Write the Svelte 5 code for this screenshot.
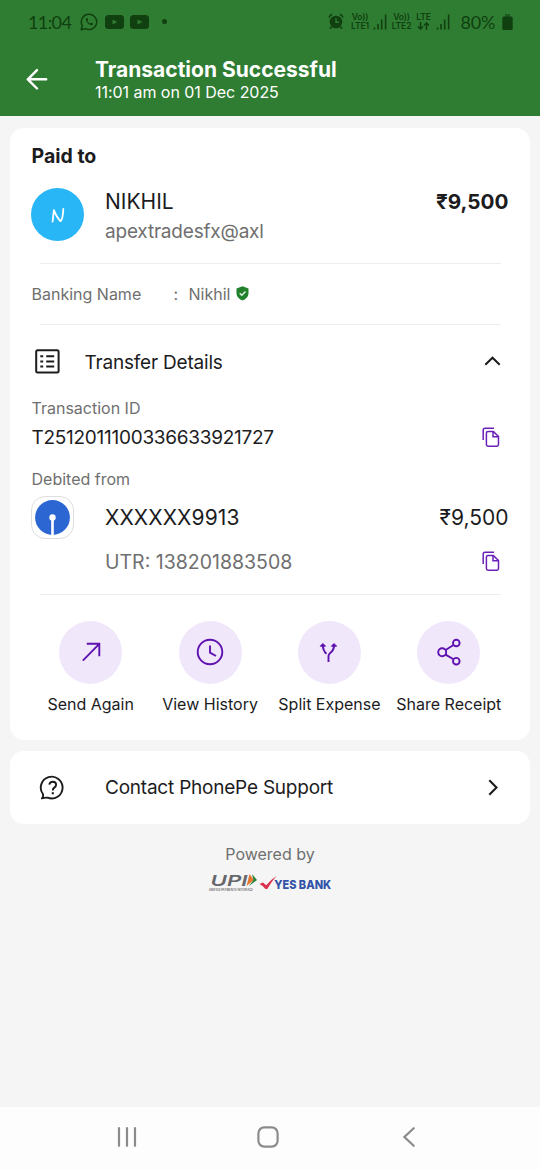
<script lang="ts">
  const actions = [
    { id: 'send', label: 'Send Again' },
    { id: 'history', label: 'View History' },
    { id: 'split', label: 'Split Expense' },
    { id: 'share', label: 'Share Receipt' },
  ];

  let expanded = $state(true);
</script>

{#snippet copyIcon()}
  <svg class="copy" width="18" height="21" viewBox="0 0 18 21" fill="none" stroke="#6a20b8" stroke-width="1.5">
    <path d="M1.2 13V3Q1.2 1.2 3 1.2H12" />
    <path d="M6.1 4.4H11.2L16.5 9.5V17.5Q16.5 19.2 14.8 19.2H6.1Q4.4 19.2 4.4 17.5V6.1Q4.4 4.4 6.1 4.4Z" stroke-linejoin="round" />
    <path d="M11 4.6V9.7H16.3" />
  </svg>
{/snippet}

{#snippet signal()}
  <svg class="signal" width="14" height="18" viewBox="0 0 14 18" stroke="#10400f" stroke-width="1.6">
    <path d="M1.5 14.5V16.5M5 11V16.5M8.7 6.5V16.5M12.6 1.5V16.5" />
  </svg>
{/snippet}

<div class="screen">
  <header>
    <div class="status-bar">
      <span class="time">11:04</span>
      <svg class="whatsapp" width="18" height="18" viewBox="0 0 18 18" fill="none" stroke="#10400f" stroke-width="1.5">
        <path d="M1.2 16.8L2.3 12.6A7.7 7.7 0 1 1 5.3 15.6Z" stroke-linejoin="round" />
        <path d="M6 5.3C5.2 8.5 9 12.8 12.5 12.2L13 10.6L11 9.6L10 10.6Q8.2 9.8 7.4 8L8.2 7L7.4 5.1Z" fill="#10400f" stroke="none" />
      </svg>
      {#each [0, 1] as n (n)}
        <svg class="youtube" width="19" height="14" viewBox="0 0 19 14">
          <rect width="19" height="14" rx="3.5" fill="#10400f" />
          <path d="M7.5 4.5L12.3 7L7.5 9.5Z" fill="#2f7d33" />
        </svg>
      {/each}
      <span class="dot"></span>

      <svg class="alarm" width="16" height="17" viewBox="0 0 16 17" fill="none">
        <circle cx="8" cy="9" r="6.3" fill="#10400f" />
        <path d="M1 4.5Q1.8 2.2 4 1.2M15 4.5Q14.2 2.2 12 1.2M3.6 13.8L2 15.8M12.4 13.8L14 15.8" stroke="#10400f" stroke-width="1.6" />
        <path d="M8 5.3V9.3H11" stroke="#2f7d33" stroke-width="1.4" />
      </svg>
      <div class="lte sim1"><span>Vo))</span><span>LTE1</span></div>
      {@render signal()}
      <div class="lte sim2"><span>Vo))</span><span>LTE2</span></div>
      <div class="lte data">
        <span>LTE</span>
        <svg width="13" height="8" viewBox="0 0 13 8" fill="none" stroke="#10400f" stroke-width="1.5">
          <path d="M3.5 0V7M1 4.5L3.5 7L6 4.5M9.5 8V1M7 3.5L9.5 1L12 3.5" />
        </svg>
      </div>
      {@render signal()}
      <span class="percent">80%</span>
      <svg class="battery" width="11" height="16" viewBox="0 0 11 16">
        <rect x="3" y="0" width="5" height="3" fill="#1d5a20" />
        <rect x="0.3" y="2.5" width="10.4" height="13.5" rx="1.5" fill="#10400f" />
      </svg>
    </div>

    <div class="title-bar">
      <svg width="22" height="22" viewBox="0 0 22 22" fill="none" stroke="#fff" stroke-width="2.4" stroke-linecap="round" stroke-linejoin="round">
        <path d="M20.2 11.3H1.8M11 2.1L1.8 11.3L11 20.5" />
      </svg>
      <div class="titles">
        <h1>Transaction Successful</h1>
        <p>11:01 am on 01 Dec 2025</p>
      </div>
    </div>
  </header>

  <main>
    <section class="card">
      <h2>Paid to</h2>
      <div class="payee">
        <div class="avatar">
          <svg width="16" height="18" viewBox="0 0 16 18" fill="none" stroke="#fff" stroke-width="1.8" stroke-linecap="round" stroke-linejoin="round">
            <path d="M2.6 15.6L3.9 4.2Q6.8 11.5 10.4 15.2Q12.9 14 13.3 2.8" />
          </svg>
        </div>
        <div class="payee-text">
          <span class="name">NIKHIL</span>
          <span class="vpa">apextradesfx@axl</span>
        </div>
        <span class="amount bold">₹9,500</span>
      </div>
      <div class="divider"></div>

      <div class="banking">
        <span class="banking-label">Banking Name</span>
        <span class="colon">:</span>
        <span class="banking-value">Nikhil</span>
        <svg width="13" height="15" viewBox="0 0 13 15">
          <path d="M6.5 0.3L12.5 2.4V7.5Q12.2 12 6.5 14.6Q0.8 12 0.5 7.5V2.4Z" fill="#22812b" />
          <path d="M3.7 7.3L5.8 9.3L9.5 5.4" fill="none" stroke="#e4f4e5" stroke-width="1.4" />
        </svg>
      </div>
      <div class="divider"></div>

      <button class="details-toggle" onclick={() => (expanded = !expanded)}>
        <svg class="list-icon" width="25" height="25" viewBox="0 0 25 25" fill="none" stroke="#1c1c1e" stroke-width="2">
          <rect x="1.2" y="1.2" width="22.4" height="22.4" rx="1.5" />
          <path d="M5.3 7.2H8.2M5.3 12.4H8.2M5.3 17.6H8.2M11.2 7.2H19.2M11.2 12.4H19.2M11.2 17.6H19.2" />
        </svg>
        <span>Transfer Details</span>
        <svg class="chevron" class:closed={!expanded} width="17" height="10" viewBox="0 0 17 10" fill="none" stroke="#1c1c1e" stroke-width="2">
          <path d="M1.3 8.8L8.5 1.7L15.7 8.8" />
        </svg>
      </button>

      {#if expanded}
        <div class="label first">Transaction ID</div>
        <div class="id-row">
          <span>T2512011100336633921727</span>
          {@render copyIcon()}
        </div>
        <div class="label">Debited from</div>
        <div class="account">
          <div class="bank-logo">
            <svg width="35" height="35" viewBox="0 0 35 35">
              <circle cx="17.5" cy="17.5" r="17.4" fill="#2c66d3" />
              <circle cx="17.5" cy="17.5" r="3.2" fill="#fff" />
              <rect x="16.2" y="18" width="2.6" height="17" fill="#fff" />
            </svg>
          </div>
          <span class="number">XXXXXX9913</span>
          <span class="amount">₹9,500</span>
        </div>
        <div class="utr">
          <span>UTR: 138201883508</span>
          {@render copyIcon()}
        </div>
      {/if}
      <div class="divider"></div>

      <div class="actions">
        {#each actions as action (action.id)}
          <div class="action">
            <div class="action-icon">
              <svg width="30" height="30" viewBox="0 0 30 30" fill="none" stroke="#5e12b0" stroke-width="1.9">
                {#if action.id === 'send'}
                  <path d="M6.8 23.7L23.3 6.8M10.8 6.8H23.3V19.3" />
                {:else if action.id === 'history'}
                  <circle cx="15" cy="15" r="12.3" />
                  <path d="M15 8.5V15.6L21 19" />
                {:else if action.id === 'split'}
                  <path d="M14.5 25V19Q14.5 17.4 16 16.2Q20.3 13 20 8M12.5 16.8Q8.8 13.5 8.9 8" />
                  <path d="M6.3 9.2L8.9 6.5L11.5 9.2ZM17.4 9.2L20 6.5L22.6 9.2Z" fill="#5e12b0" stroke-width="1" />
                {:else}
                  <circle cx="8.2" cy="15.3" r="4" />
                  <circle cx="22.3" cy="6" r="3.3" />
                  <circle cx="22.3" cy="24.2" r="3.3" />
                  <path d="M11.6 13L19.5 8M11.6 17.6L19.5 22.3" />
                {/if}
              </svg>
            </div>
            <span>{action.label}</span>
          </div>
        {/each}
      </div>
    </section>

    <section class="card support">
      <svg width="26" height="26" viewBox="0 0 26 26" fill="none" stroke="#1c1c1e" stroke-width="1.9">
        <path d="M2.9 23.4Q4.7 21.8 3.9 19A10.9 10.9 0 1 1 8.7 22.7Q6.1 22.4 2.9 23.4Z" stroke-linejoin="round" />
        <path d="M10.3 9.6Q10.8 6.7 13.8 6.7Q17.1 6.7 17.1 9.7Q17.1 11.4 15.3 12.6Q13.8 13.6 13.8 15.5" />
        <path d="M13.8 17.2V19.3" stroke-width="2.1" />
      </svg>
      <span>Contact PhonePe Support</span>
      <svg class="arrow" width="10" height="17" viewBox="0 0 10 17" fill="none" stroke="#1c1c1e" stroke-width="2.1">
        <path d="M1.3 1.2L8.5 8.5L1.3 15.8" />
      </svg>
    </section>

    <footer>
      <span>Powered by</span>
      <div class="brands">
        <svg width="50" height="22" viewBox="-1 -1 50 22">
          <path d="M40.5 0L45 6L37.5 12Z" fill="#e8772e" />
          <path d="M43 0L48 6L40 12L44.5 6Z" fill="#26823b" />
          <text class="upi" x="1.5" y="11.6" textLength="37" lengthAdjust="spacingAndGlyphs">UPI</text>
          <text class="upi-small" x="0" y="16.6" textLength="44" lengthAdjust="spacingAndGlyphs">UNIFIED PAYMENTS INTERFACE</text>
        </svg>
        <svg width="78" height="22" viewBox="0 -2 78 22">
          <path d="M1.5 9L5 7.5L8.2 10.3Q12 5.2 18.5 1Q13.5 6.5 9.3 14L7.5 14Q5.5 11 1.5 9Z" fill="#dc2f4c" />
          <text class="yes" x="16.2" y="13.5" textLength="57" lengthAdjust="spacingAndGlyphs">YES BANK</text>
        </svg>
      </div>
    </footer>
  </main>

  <nav>
    <svg width="20" height="20" viewBox="0 0 20 20" stroke="#8b8b8b" stroke-width="2.2" stroke-linecap="round">
      <path d="M2 1.2V18.8M10 1.2V18.8M18 1.2V18.8" />
    </svg>
    <svg class="home" width="22" height="22" viewBox="0 0 22 22" fill="none" stroke="#8b8b8b" stroke-width="2.2">
      <rect x="1.4" y="1.4" width="19.2" height="19.2" rx="5.8" />
    </svg>
    <svg width="12" height="20" viewBox="0 0 12 20" fill="none" stroke="#8b8b8b" stroke-width="2.2" stroke-linecap="round">
      <path d="M10.7 1.2L1.4 10L10.7 18.8" />
    </svg>
  </nav>
</div>

<style>
  :global(body) {
    background: #f5f5f5;
  }

  .screen {
    width: 540px;
    height: 1170px;
    display: flex;
    flex-direction: column;
    background: #f5f5f5;
    color: #1c1c1e;
    font-family: Inter, sans-serif;
    overflow: hidden;
    white-space: nowrap;
  }

  svg {
    display: block;
    flex-shrink: 0;
  }

  h1, h2, p {
    margin: 0;
  }

  header {
    height: 116px;
    background: #2f7d33;
  }

  .status-bar {
    height: 43px;
    padding-left: 28px;
    display: flex;
    align-items: center;
    color: #10400f;
  }

  .time, .percent {
    font-family: Lato, sans-serif;
    font-size: 18px;
    letter-spacing: -0.6px;
  }

  .time {
    width: 52px;
  }

  .percent {
    width: 34px;
    margin-left: 10.5px;
    letter-spacing: -0.2px;
  }

  .whatsapp {
    margin-right: 7px;
  }

  .youtube {
    margin-right: 6px;
  }

  .dot {
    width: 5px;
    height: 5px;
    margin: 0 161px 0 7px;
    border-radius: 50%;
    background: #10400f;
  }

  .lte {
    display: flex;
    flex-direction: column;
    align-items: center;
    font-size: 8.5px;
    line-height: 9px;
    font-weight: 600;
    letter-spacing: -0.1px;
  }

  .sim1 {
    width: 20px;
    margin-left: 6px;
  }

  .sim2 {
    width: 21px;
    margin-left: 4px;
  }

  .data {
    width: 17px;
    margin-left: 3px;
  }

  .data + .signal {
    margin-left: 4px;
  }

  .signal {
    margin-left: 3px;
  }

  .battery {
    margin-left: 7px;
  }

  .title-bar {
    padding: 15px 0 0 26px;
    display: flex;
    gap: 47px;
  }

  .title-bar > svg {
    margin-top: 10px;
  }

  .titles {
    color: #fff;
  }

  h1 {
    font-size: 21px;
    line-height: 24px;
    font-weight: 700;
  }

  .titles p {
    font-size: 16px;
    line-height: 20px;
    letter-spacing: -0.04px;
  }

  main {
    flex: 1;
    padding: 12px 10px 0;
  }

  .card {
    background: #fff;
    border-radius: 14px;
    padding: 0 21.5px;
  }

  h2 {
    padding-top: 1px;
    height: 55px;
    font-size: 19.5px;
    line-height: 55px;
    font-weight: 700;
  }

  .payee {
    display: flex;
    height: 79px;
    padding-top: 4px;
    box-sizing: border-box;
    line-height: 28px;
  }

  .avatar {
    width: 53px;
    height: 53px;
    margin: 0 21px 0 -0.5px;
    border-radius: 50%;
    background: #29b6f6;
    display: flex;
    align-items: center;
    justify-content: center;
  }

  .payee-text {
    display: flex;
    flex-direction: column;
  }

  .name, .amount, .number {
    font-size: 21px;
  }

  .vpa {
    font-size: 19px;
    line-height: 31px;
    letter-spacing: -0.2px;
    color: #6f6f6f;
  }

  .amount {
    margin-left: auto;
  }

  .bold {
    font-size: 20.7px;
    font-weight: 700;
  }

  .divider {
    height: 1px;
    margin: 0 8px;
    background: #ededed;
  }

  .banking {
    height: 60px;
    padding-bottom: 1px;
    box-sizing: border-box;
    display: flex;
    align-items: center;
    font-size: 16px;
    color: #6f6f6f;
  }

  .banking-label {
    width: 142px;
  }

  .colon {
    width: 15px;
  }

  .banking-value {
    margin-right: 6px;
  }

  .details-toggle {
    width: 100%;
    height: 74px;
    padding: 0 8px 2px 3px;
    display: flex;
    align-items: center;
    background: none;
    border: none;
    color: inherit;
    font: inherit;
    font-size: 19px;
    letter-spacing: -0.2px;
  }

  .details-toggle span {
    margin-top: 2px;
  }

  .list-icon {
    margin-right: 25px;
  }

  .chevron {
    margin-left: auto;
  }

  .closed {
    transform: rotate(180deg);
  }

  .label {
    font-size: 16px;
    line-height: 24px;
    color: #6f6f6f;
  }

  .first {
    margin-top: -3px;
  }

  .id-row {
    height: 47px;
    padding-bottom: 13px;
    box-sizing: border-box;
    display: flex;
    align-items: center;
    justify-content: space-between;
    font-size: 19px;
    letter-spacing: -0.27px;
  }

  .copy {
    margin-right: 9px;
  }

  .account {
    height: 54px;
    padding-bottom: 1px;
    box-sizing: border-box;
    display: flex;
    align-items: center;
  }

  .bank-logo {
    width: 43px;
    height: 43px;
    margin: 0 31px 0 -0.5px;
    box-sizing: border-box;
    border: 1px solid #dedede;
    border-radius: 14px;
    display: flex;
    align-items: center;
    justify-content: center;
  }

  .number {
    letter-spacing: 0.1px;
  }

  .utr {
    height: 49px;
    padding: 0 0 16px 73.5px;
    box-sizing: border-box;
    display: flex;
    align-items: center;
    justify-content: space-between;
    font-size: 19.5px;
    color: #6f6f6f;
  }

  .actions {
    height: 145px;
    margin-left: -0.5px;
    padding-top: 25.5px;
    box-sizing: border-box;
    display: grid;
    grid-template-columns: repeat(4, 1fr);
  }

  .action {
    display: flex;
    flex-direction: column;
    align-items: center;
    gap: 9.5px;
    font-size: 16px;
    line-height: 22px;
  }

  .action-icon {
    width: 63px;
    height: 63px;
    border-radius: 50%;
    background: #f1e7fb;
    display: flex;
    align-items: center;
    justify-content: center;
  }

  .support {
    margin-top: 11px;
    height: 73px;
    padding: 0 32px 0 29px;
    display: flex;
    align-items: center;
    font-size: 19px;
    letter-spacing: -0.22px;
  }

  .support span {
    margin-left: 40px;
  }

  .arrow {
    margin-left: auto;
  }

  footer {
    padding-top: 19px;
    display: flex;
    flex-direction: column;
    align-items: center;
    font-size: 16px;
    line-height: 22px;
    color: #6f6f6f;
  }

  .brands {
    margin: 8px 0 0 4px;
    display: flex;
  }

  .upi {
    font-size: 15px;
    line-height: 1;
    font-weight: 600;
    font-style: italic;
    fill: #66676a;
  }

  .upi-small {
    font-size: 3px;
    line-height: 1;
    font-weight: 600;
    fill: #66676a;
  }

  .yes {
    font-size: 12px;
    font-weight: 800;
    fill: #3152a8;
  }

  nav {
    height: 63px;
    padding: 0 125px 4px 117px;
    box-sizing: border-box;
    display: flex;
    align-items: center;
    justify-content: space-between;
    background: #fdfdfd;
  }

  .home {
    margin-right: 4px;
  }
</style>
